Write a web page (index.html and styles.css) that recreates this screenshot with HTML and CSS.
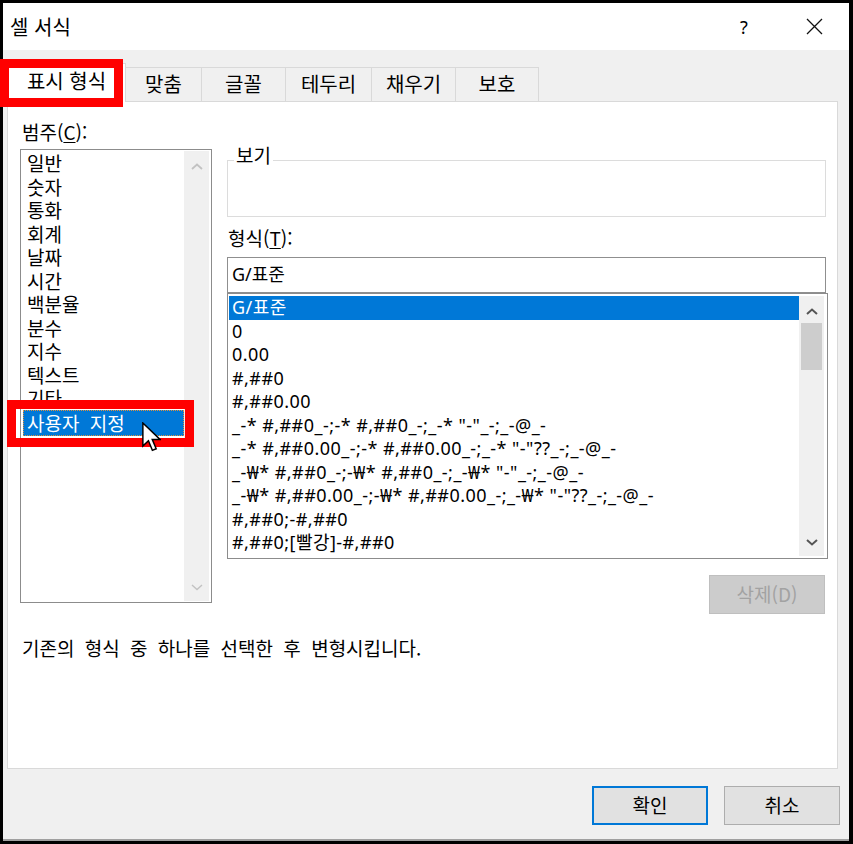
FILE: index.html
```html
<!DOCTYPE html>
<html lang="ko">
<head>
<meta charset="utf-8">
<title>셀 서식</title>
<link rel="stylesheet" href="styles.css">
</head>
<body>
<div class="screen">
  <div class="dialog">
    <div class="titlebar">
      <span class="title">셀 서식</span>
      <span class="help">?</span>
      <span class="close">
        <svg width="17" height="17" viewBox="0 0 17 17"><path d="M1 1 L16 16 M16 1 L1 16" stroke="#111" stroke-width="1.3" fill="none"/></svg>
      </span>
    </div>
    <div class="body">
      <div class="tabs">
        <div class="tab sel">표시 형식</div>
        <div class="tab w1">맞춤</div>
        <div class="tab w2">글꼴</div>
        <div class="tab w3">테두리</div>
        <div class="tab w4">채우기</div>
        <div class="tab w5">보호</div>
      </div>
      <div class="panel">
        <div class="main">
          <div class="left">
            <div class="label">범주(<u>C</u>):</div>
            <div class="listbox cat">
              <ul class="items">
                <li class="item">일반</li>
                <li class="item">숫자</li>
                <li class="item">통화</li>
                <li class="item">회계</li>
                <li class="item">날짜</li>
                <li class="item">시간</li>
                <li class="item">백분율</li>
                <li class="item">분수</li>
                <li class="item">지수</li>
                <li class="item">텍스트</li>
                <li class="item">기타</li>
                <li class="item sel">사용자 지정</li>
              </ul>
              <div class="scrollbar">
                <div class="sb-btn up"><svg width="12" height="7" viewBox="0 0 12 7"><polyline points="1,6 6,1.5 11,6" fill="none" stroke="#c2c2c2" stroke-width="1.8"/></svg></div>
                <div class="sb-btn down"><svg width="12" height="7" viewBox="0 0 12 7"><polyline points="1,1 6,5.5 11,1" fill="none" stroke="#c2c2c2" stroke-width="1.4"/></svg></div>
              </div>
            </div>
          </div>
          <div class="right">
            <div class="group"><div class="group-label">보기</div></div>
            <div class="label fmt-label">형식(<u>T</u>):</div>
            <div class="input">G/표준</div>
            <div class="listbox fmt">
              <ul class="items">
                <li class="item sel">G/표준</li>
                <li class="item">0</li>
                <li class="item">0.00</li>
                <li class="item">#,##0</li>
                <li class="item">#,##0.00</li>
                <li class="item">_-* #,##0_-;-* #,##0_-;_-* "-"_-;_-@_-</li>
                <li class="item">_-* #,##0.00_-;-* #,##0.00_-;_-* "-"??_-;_-@_-</li>
                <li class="item">_-₩* #,##0_-;-₩* #,##0_-;_-₩* "-"_-;_-@_-</li>
                <li class="item">_-₩* #,##0.00_-;-₩* #,##0.00_-;_-₩* "-"??_-;_-@_-</li>
                <li class="item">#,##0;-#,##0</li>
                <li class="item">#,##0;[빨강]-#,##0</li>
              </ul>
              <div class="scrollbar">
                <div class="sb-btn up"><svg width="12" height="7" viewBox="0 0 12 7"><polyline points="1,6 6,1.5 11,6" fill="none" stroke="#555" stroke-width="2"/></svg></div>
                <div class="thumb"></div>
                <div class="sb-btn down"><svg width="12" height="7" viewBox="0 0 12 7"><polyline points="1,1 6,5.5 11,1" fill="none" stroke="#555" stroke-width="2"/></svg></div>
              </div>
            </div>
            <div class="actions"><button class="btn btn-del" disabled>삭제(D)</button></div>
          </div>
        </div>
        <p class="desc">기존의 형식 중 하나를 선택한 후 변형시킵니다.</p>
      </div>
      <div class="footer">
        <button class="btn btn-ok">확인</button>
        <button class="btn">취소</button>
      </div>
    </div>
  </div>
  <div class="annot annot-tab"></div>
  <div class="annot annot-item"></div>
  <svg class="cursor" width="19" height="31" viewBox="0 0 13 21"><path d="M0.6 0.6 L0.6 16.4 L4.4 12.7 L7.1 19.3 L9.7 18.2 L7 11.8 L12.3 11.8 Z" fill="#fff" stroke="#000" stroke-width="1" stroke-linejoin="miter"/></svg>
</div>
</body>
</html>
```
FILE: styles.css
```css
* { box-sizing: border-box; }
html, body { margin: 0; padding: 0; }
body {
  width: 853px;
  height: 844px;
  overflow: hidden;
  background: #000;
  font-family: "Noto Sans CJK KR", "Noto Sans", sans-serif;
  font-size: 19px;
  color: #000;
}
.screen {
  position: relative;
  width: 853px;
  height: 844px;
  padding: 3px 4px 3px 3px;
  background: #000;
}
.dialog {
  height: 838px;
  background: #f0f0f0;
  border-bottom: 2px solid #a0a0a0;
  display: flex;
  flex-direction: column;
}
.titlebar {
  height: 47px;
  flex: none;
  background: #fff;
  display: flex;
  align-items: center;
  padding: 0 12px 0 7px;
}
.title { line-height: 24px; font-size: 20px; }
.help { margin-left: auto; width: 20px; text-align: center; line-height: 24px; font-family: "Noto Sans", sans-serif; font-size: 18px; }
.close { width: 46px; margin-left: 37px; display: flex; justify-content: center; }

.body {
  flex: 1;
  padding: 0 9px 0 4px;
  display: flex;
  flex-direction: column;
}
.tabs {
  display: flex;
  align-items: flex-end;
  height: 38px;
  margin-top: 13px;
  flex: none;
}
.tab {
  height: 34px;
  border: 1px solid #d9d9d9;
  border-bottom: 0;
  margin-left: -1px;
  display: flex;
  align-items: center;
  justify-content: center;
  background: #f0f0f0;
  line-height: 24px;
  font-size: 20px;
  padding-bottom: 1px;
}
.tab.sel {
  width: 119px;
  height: 39px;
  margin-left: 0;
  margin-bottom: -1px;
  background: #fff;
  position: relative;
  z-index: 1;
  padding-bottom: 4px;
}
.tab.w1 { width: 77px; }
.tab.w2 { width: 85px; }
.tab.w3 { width: 87px; }
.tab.w4 { width: 85px; }
.tab.w5 { width: 84px; }

.panel {
  height: 668px;
  flex: none;
  margin-right: 2px;
  background: #fff;
  border: 1px solid #d9d9d9;
  padding: 18px 0 0 12px;
}
.main { display: flex; align-items: flex-start; }
.left { width: 192px; }
.label { line-height: 24px; padding-left: 2px; white-space: nowrap; }
.label u { text-underline-offset: 2px; }

.listbox {
  border: 1px solid #8c8c8c;
  background: #fff;
  display: flex;
}
.cat {
  margin-top: 5px;
  width: 192px;
  height: 454px;
  padding: 1px 2px 1px 0;
}
.cat .items { padding-left: 2px; }
.cat .item { padding-left: 4px; word-spacing: 5px; }
.cat .item.sel {
  line-height: 26.5px;
  outline: 1px dotted #e0903c;
  outline-offset: -1px;
}

.items {
  flex: 1;
  list-style: none;
  margin: 0;
  padding: 0;
}
.item { line-height: 23.5px; white-space: nowrap; }
.item.sel { background: #0078d7; color: #fff; }

.scrollbar {
  width: 25px;
  flex: none;
  background: #f0f0f0;
  display: flex;
  flex-direction: column;
}
.sb-btn {
  height: 27px;
  flex: none;
  display: flex;
  justify-content: center;
  align-items: center;
}
.sb-btn.up { padding-top: 4px; }
.sb-btn.down { padding-bottom: 1px; margin-top: auto; }
.thumb { height: 47px; margin: 0 2px; background: #cdcdcd; flex: none; }

.right { margin-left: 15px; width: 601px; }
.group {
  margin-top: 40px;
  width: 599px;
  height: 57px;
  border: 1px solid #dcdcdc;
}
.group-label {
  width: fit-content;
  margin: -17px 0 0 6px;
  padding: 0 2px;
  background: #fff;
  line-height: 22px;
}
.fmt-label { margin-top: 9px; padding-left: 1px; }
.input {
  margin-top: 7px;
  width: 599px;
  height: 36px;
  border: 1px solid #8f8f8f;
  padding-left: 4px;
  line-height: 33px;
  font-family: "Noto Sans", "Noto Sans CJK KR", sans-serif;
  font-size: 18px;
}
.fmt {
  width: 601px;
  height: 266px;
  padding: 2px 3px 2px 1px;
}
.fmt .items {
  font-family: "Noto Sans", "Noto Sans CJK KR", sans-serif;
  font-size: 18px;
  letter-spacing: 0.45px;
}
.fmt .item { padding-left: 3px; }

.actions {
  display: flex;
  justify-content: flex-end;
  margin-top: 16px;
  padding-right: 3px;
}
.btn {
  width: 116px;
  height: 39px;
  font: inherit;
  color: #000;
  background: #e1e1e1;
  border: 1px solid #adadad;
  padding: 0 0 2px;
  margin: 0;
}
.btn-del { background: #cccccc; border-color: #bfbfbf; color: #a2a2a2; }
.btn-ok { border: 2px solid #0078d7; }

.desc {
  margin: 22px 0 0;
  padding-left: 2px;
  line-height: 24px;
  word-spacing: 5px;
}
.footer {
  display: flex;
  justify-content: flex-end;
  gap: 16px;
  margin-top: 17px;
}

.annot {
  position: absolute;
  border: 9px solid #ff0000;
  z-index: 5;
}
.annot-tab { left: 0; top: 59px; width: 123px; height: 48px; }
.annot-item { left: 7px; top: 400px; width: 187px; height: 47px; }
.cursor { position: absolute; left: 142px; top: 422px; z-index: 6; }
```
